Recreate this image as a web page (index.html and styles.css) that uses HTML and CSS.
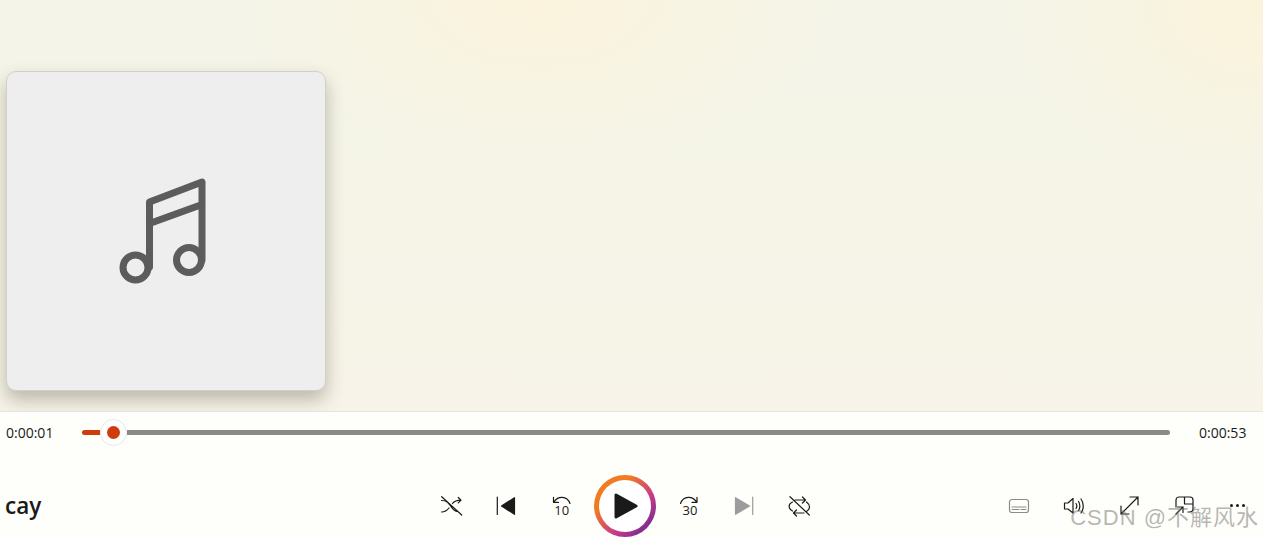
FILE: index.html
```html
<!DOCTYPE html>
<html lang="en">
<head>
<meta charset="utf-8">
<title>Media Player</title>
<link rel="stylesheet" href="styles.css">
</head>
<body>
<main class="player">
  <section class="stage">
    <div class="art">
      <svg class="note" viewBox="116 171 100 120">
        <circle cx="135.500" cy="267.500" r="12.500"/>
        <circle cx="189" cy="260" r="12.500"/>
        <path d="M149.500 267V202L202 182V260M149.500 223.500L202 204.500"/>
      </svg>
    </div>
  </section>
  <section class="bar">
    <div class="timeline">
      <span class="time">0:00:01</span>
      <div class="slider">
        <span class="elapsed"></span>
        <span class="thumb"><span class="dot"></span></span>
        <span class="rest"></span>
      </div>
      <span class="time end">0:00:53</span>
    </div>
    <div class="controls">
      <div class="title">cay</div>
      <div class="transport">
        <button class="btn"><svg class="ico" viewBox="0 0 24 24"><path d="M2.500 6.500C8 6.500 9.500 9 12 12.500C14.500 16 15.500 17.500 18 17.500M2.500 18C7 18 8.500 16 10 14M13.500 9.500C15 7.500 17 6.200 22 6.200M19.300 3.500L22 6.200L19.300 8.900M2.700 2.700L22.700 21"/></svg></button>
        <button class="btn"><svg class="ico" viewBox="0 0 24 24"><path class="solid" d="M20.500 3.700V20.300L7.500 12Z"/><path d="M3.300 3V20.500"/></svg></button>
        <button class="btn"><svg class="ico" viewBox="0 0 24 24"><path d="M4.500 3.300V8.300H9.500M4.500 8.300C9 1.500 18 1.500 21 9.500"/><text class="num" x="12.800" y="21">10</text></svg></button>
        <button class="play-btn"><span class="ring"><span class="disc"><svg class="play" viewBox="0 0 26 28"><path d="M3 3V25L23 14Z"/></svg></span></span></button>
        <button class="btn"><svg class="ico" viewBox="0 0 24 24"><path d="M20 3.300V8.300H15M20 8.300C15.500 1.500 6.500 1.500 3.500 9.500"/><text class="num" x="13" y="21">30</text></svg></button>
        <button class="btn"><svg class="ico dim" viewBox="0 0 24 24"><path class="solid" d="M3.500 3.700V20.300L17.500 12Z"/><path d="M20.700 3V20.500"/></svg></button>
        <button class="btn"><svg class="ico" viewBox="0 0 24 24"><path d="M8 6H18.500M15.500 3L18.500 6L15.500 9M19.500 8C23.500 11 23.500 15 19.500 17.500M17 19H6.500M9.500 16L6.500 19L9.500 22M5.500 17C1 14.500 1 10 5.500 8M3 2.700L22.300 21"/></svg></button>
      </div>
      <div class="extras">
        <button class="btn"><svg class="ico faded" viewBox="0 0 24 24"><rect x="2.500" y="5.500" width="19" height="13" rx="2.500"/><path d="M5 13H19M5 15.500H12M14 15.500H19"/></svg></button>
        <button class="btn"><svg class="ico" viewBox="0 0 24 24"><path d="M2.500 9H6L11 4.500V19L6 15H2.500ZM14 9.500C15 11 15 13 14 14.500M16.500 7.500C18.300 10 18.300 14 16.500 16.500M19 5C22 9 22 15 19 19"/></svg></button>
        <button class="btn"><svg class="ico" viewBox="0 0 24 24"><path d="M4 20L21 3M13 3H21V11M4 12V20H12"/></svg></button>
        <button class="btn"><svg class="ico" viewBox="0 0 24 24"><path d="M4 13V6C4 4.300 5.300 3 7 3H18C19.700 3 21 4.300 21 6V15C21 16.500 19.700 18 18 18H16M12.500 3V10H21M4 20L11 13M5.500 13H11V18.500"/></svg></button>
        <button class="btn more"><span class="dots"><span></span><span></span><span></span></span></button>
      </div>
    </div>
  </section>
  <div class="watermark">CSDN @不解风水</div>
</main>
</body>
</html>
```
FILE: styles.css
```css
* { box-sizing: border-box; }
html, body { margin: 0; height: 100%; overflow: hidden; }
body { font-family: "Open Sans", "Noto Sans", sans-serif; color: #1a1a1a; background: #fefefa; }
.player { position: relative; width: 1263px; height: 538px; overflow: hidden; }

.stage {
  height: 411px;
  padding: 71px 0 0 6px;
  background:
    radial-gradient(ellipse 300px 170px at 540px 0, #fbf3dd 0%, rgba(251,243,221,0) 100%),
    radial-gradient(ellipse 260px 180px at 1263px 10px, #fbf3dc 0%, rgba(251,243,220,0) 100%),
    linear-gradient(180deg, #f4f4e8 0%, #f5f4e7 50%, #f7f3e8 100%);
}
.art {
  width: 320px;
  height: 320px;
  display: flex;
  align-items: center;
  justify-content: center;
  background: #eeeeee;
  border: 1px solid #d2d0c8;
  border-radius: 10px;
  box-shadow: 0 9px 18px rgba(50,50,30,.3);
}
.note { width: 100px; height: 120px; fill: none; stroke: #5c5c5c; stroke-width: 7; stroke-linejoin: round; stroke-linecap: round; }

.bar { height: 127px; background: #fefefa; border-top: 1px solid #e6e4dc; }
.timeline { display: grid; grid-template-columns: 76px 1088px 1fr; align-items: center; height: 41px; padding-left: 6px; }
.time { font-size: 14px; line-height: 20px; color: #1a1a1a; }
.time.end { justify-self: start; margin-left: 29px; }
.slider { display: flex; align-items: center; }
.elapsed { width: 18px; height: 5px; background: #d03c0a; border-radius: 3px 0 0 3px; }
.thumb { width: 27px; height: 27px; flex: none; display: flex; align-items: center; justify-content: center; background: #fff; border: 1px solid #e6e6e6; border-radius: 50%; }
.dot { width: 13px; height: 13px; background: #d03c0a; border-radius: 50%; }
.rest { flex: 1; height: 5px; background: #8a8a8a; border-radius: 0 3px 3px 0; }

.controls { display: flex; align-items: center; height: 62px; margin-top: 22px; }
.title { width: 423px; padding: 0 0 1px 5px; font-size: 22.500px; line-height: 30px; font-weight: 600; }
.transport { display: flex; align-items: center; }
.extras { display: flex; align-items: center; margin-left: auto; }
button { padding: 0; border: 0; background: none; }
.btn { width: 55px; height: 40px; display: flex; align-items: center; justify-content: center; }
.btn.more { width: 52px; }
.ico { width: 24px; height: 24px; fill: none; stroke: #1a1a1a; stroke-width: 1.200; stroke-linecap: round; stroke-linejoin: round; }
.ico .solid { fill: #1a1a1a; }
.ico.dim { stroke: #9c9c9c; }
.ico.dim .solid { fill: #9c9c9c; }
.ico.faded { stroke: #8c8c8c; }
.num { font-family: "Open Sans", sans-serif; font-size: 13px; fill: #1a1a1a; stroke: none; text-anchor: middle; }

.play-btn { width: 73px; height: 62px; display: flex; align-items: center; justify-content: center; }
.ring { width: 62px; height: 62px; padding: 5px; border-radius: 50%; background: linear-gradient(135deg, #f27a20 30%, #c53a8c 64%, #6f2a90 90%); display: block; }
.disc { width: 52px; height: 52px; display: flex; align-items: center; justify-content: center; background: #fff; border-radius: 50%; }
.play { width: 26px; height: 28px; margin-left: 3px; fill: #1a1a1a; stroke: #1a1a1a; stroke-width: 3; stroke-linejoin: round; }

.dots { display: flex; gap: 3px; margin-bottom: 2px; }
.dots span { width: 3px; height: 3px; background: #1a1a1a; border-radius: 50%; }

.watermark {
  position: absolute;
  right: 4px;
  top: 503px;
  font-family: "Liberation Sans", "Noto Sans CJK SC", sans-serif;
  font-size: 22px;
  line-height: 30px;
  letter-spacing: 1px;
  color: rgba(110,110,110,.5);
  white-space: nowrap;
}
```
